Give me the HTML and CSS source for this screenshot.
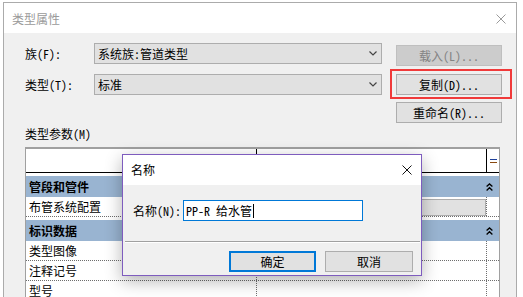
FILE: index.html
```html
<!DOCTYPE html>
<html lang="zh-CN">
<head>
<meta charset="utf-8">
<title>类型属性</title>
<link rel="stylesheet" href="styles.css">
</head>
<body>
<div class="win">
  <div class="titlebar">
    <span class="title">类型属性</span>
    <svg class="xclose" width="10" height="10" viewBox="0 0 10 10"><path d="M0.5 0.5L9.5 9.5M9.5 0.5L0.5 9.5" stroke="#9a9a9a" stroke-width="1" fill="none"/></svg>
  </div>
  <div class="content">
    <div class="top">
      <div class="fields">
        <div class="field">
          <span class="lbl">族(F):</span>
          <div class="select"><span>系统族:管道类型</span><svg width="8" height="5" viewBox="0 0 8 5"><path d="M0.5 0.5L4 4L7.5 0.5" fill="none" stroke="#444" stroke-width="1.2"/></svg></div>
        </div>
        <div class="field">
          <span class="lbl">类型(T):</span>
          <div class="select"><span>标准</span><svg width="8" height="5" viewBox="0 0 8 5"><path d="M0.5 0.5L4 4L7.5 0.5" fill="none" stroke="#444" stroke-width="1.2"/></svg></div>
        </div>
      </div>
      <div class="btns">
        <div class="btn b1">载入(L)...</div>
        <div class="btn b2">复制(D)...</div>
        <div class="btn b3">重命名(R)...</div>
      </div>
    </div>
    <div class="sect">类型参数(M)</div>
    <div class="table">
      <div class="thead">
        <div class="h1"></div>
        <div class="h2"></div>
        <div class="h3"><svg width="7" height="5" viewBox="0 0 7 5"><path d="M0 0.5H7" stroke="#1d3f9a"/><path d="M0 3.5H7" stroke="#8a4a10"/></svg></div>
      </div>
      <div class="grp"><span>管段和管件</span><svg width="7" height="8" viewBox="0 0 7 8"><path d="M0.6 3.6L3.5 0.9L6.4 3.6M0.6 7.4L3.5 4.7L6.4 7.4" fill="none" stroke="#000" stroke-width="1.3"/></svg></div>
      <div class="row">
        <div class="c1">布管系统配置</div>
        <div class="c2"><div class="editbox"></div></div>
        <div class="c3"></div>
      </div>
      <div class="grp"><span>标识数据</span><svg width="7" height="8" viewBox="0 0 7 8"><path d="M0.6 3.6L3.5 0.9L6.4 3.6M0.6 7.4L3.5 4.7L6.4 7.4" fill="none" stroke="#000" stroke-width="1.3"/></svg></div>
      <div class="row">
        <div class="c1">类型图像</div>
        <div class="c2"></div>
        <div class="c3"></div>
      </div>
      <div class="row">
        <div class="c1">注释记号</div>
        <div class="c2"></div>
        <div class="c3"></div>
      </div>
      <div class="row">
        <div class="c1">型号</div>
        <div class="c2"></div>
        <div class="c3"></div>
      </div>
    </div>
  </div>
  <div class="redbox"></div>
  <div class="dlg">
    <div class="dtitle">
      <span>名称</span>
      <svg width="10" height="10" viewBox="0 0 10 10"><path d="M0.5 0.5L9.5 9.5M9.5 0.5L0.5 9.5" stroke="#111" stroke-width="1" fill="none"/></svg>
    </div>
    <div class="dbody">
      <div class="namerow">
        <span class="nlbl">名称(N):</span>
        <div class="input"><span>PP-R 给水管</span><i class="caret"></i></div>
      </div>
      <div class="sep"></div>
      <div class="dbtns">
        <div class="btn ok">确定</div>
        <div class="btn cancel">取消</div>
      </div>
    </div>
  </div>
</div>
</body>
</html>
```
FILE: styles.css
```css
* { box-sizing: border-box; }
html, body { margin: 0; padding: 0; }
body {
  width: 523px;
  height: 297px;
  overflow: hidden;
  background: #ffffff;
  font-family: "Noto Sans Mono CJK SC", "Noto Sans CJK SC", sans-serif;
  font-size: 12px;
  color: #000;
}
.win {
  position: relative;
  margin: 2px 0 0 3px;
  width: 514px;
  height: 295px;
  overflow: hidden;
  border: 1px solid #ababab;
  border-bottom: none;
  background: #f0f0f0;
}
.titlebar {
  height: 30px;
  background: #fff;
  display: flex;
  align-items: center;
  justify-content: space-between;
  padding: 0 10px 0 8px;
}
.title { color: #9a9a9a; line-height: 14px; margin-top: 1px; }
.xclose { display: block; margin-top: 1px; }
.content { padding: 10px 0 0 21px; }
.top { display: flex; }
.fields { display: flex; flex-direction: column; gap: 10px; }
.field { display: flex; align-items: center; height: 21px; }
.lbl { width: 69px; line-height: 14px; }
.select {
  width: 288px;
  height: 21px;
  border: 1px solid #adadad;
  background: #e1e1e1;
  display: flex;
  align-items: center;
  justify-content: space-between;
  padding: 0 4px 0 3px;
  line-height: 14px;
}
.select svg { display: block; }
.btns { margin-left: 14px; width: 106px; display: flex; flex-direction: column; }
.btn {
  height: 21px;
  border: 1px solid #adadad;
  background: #e1e1e1;
  display: flex;
  align-items: center;
  justify-content: center;
  line-height: 14px;
}
.b1 { margin-top: 2px; background: #cccccc; border-color: #bfbfbf; color: #838383; }
.b2 { margin-top: 8px; }
.b3 { margin-top: 7px; }
.sect { height: 24px; line-height: 22px; }
.table {
  width: 475px;
  height: 160px;
  border: 1px solid #a0a0a0;
  border-top: 2px solid #a0a0a0;
  border-bottom: none;
  background: #fff;
}
.thead { display: flex; height: 24px; border-bottom: 1px solid #000; }
.h1 { width: 231px; border-right: 1px solid #000; }
.h2 { width: 230px; border-right: 1px solid #000; }
.h3 { width: 12px; display: flex; align-items: center; justify-content: center; }
.h3 svg { display: block; margin-top: 1px; }
.grp {
  margin-top: 3px;
  height: 21px;
  background: #99b4d1;
  display: flex;
  align-items: center;
  justify-content: space-between;
  padding: 0 6px 0 3px;
  font-weight: bold;
  line-height: 14px;
}
.grp svg { display: block; }
.row { display: flex; height: 20px; border-bottom: 1px dotted #6e6e6e; }
.c1 { width: 231px; border-right: 1px dotted #6e6e6e; padding-left: 3px; line-height: 19px; }
.c2 { width: 230px; border-right: 1px dotted #6e6e6e; padding: 2px 0 0 2px; }
.c3 { width: 12px; }
.editbox { height: 17px; border: 1px solid #adadad; background: #e1e1e1; }
.redbox {
  position: absolute;
  left: 386px;
  top: 66px;
  width: 122px;
  height: 30px;
  border: 2px solid #f03a3a;
}
.dlg {
  position: absolute;
  left: 118px;
  top: 151px;
  width: 300px;
  height: 122px;
  border: 1px solid #7e5cbe;
  background: #f0f0f0;
  box-shadow: 0 5px 16px rgba(0, 0, 0, 0.3);
}
.dtitle {
  height: 30px;
  background: #fff;
  display: flex;
  align-items: center;
  justify-content: space-between;
  padding: 0 9px 0 8px;
  line-height: 14px;
}
.dtitle svg { display: block; }
.dbody { padding: 15px 0 0 0; }
.namerow { display: flex; align-items: center; padding-left: 10px; height: 21px; }
.nlbl { width: 50px; line-height: 14px; }
.input {
  width: 180px;
  height: 21px;
  border: 1px solid #0078d7;
  background: #fff;
  display: flex;
  align-items: center;
  padding-left: 2px;
  line-height: 14px;
}
.caret { display: block; width: 1px; height: 14px; background: #000; margin-left: 1px; }
.sep { margin: 20px 1px 0 2px; height: 2px; border-top: 1px solid #a0a0a0; border-bottom: 1px solid #fff; }
.dbtns { display: flex; justify-content: flex-end; gap: 9px; margin-top: 8px; padding-right: 8px; }
.ok { width: 87px; border: 2px solid #0078d7; }
.cancel { width: 88px; }
```
